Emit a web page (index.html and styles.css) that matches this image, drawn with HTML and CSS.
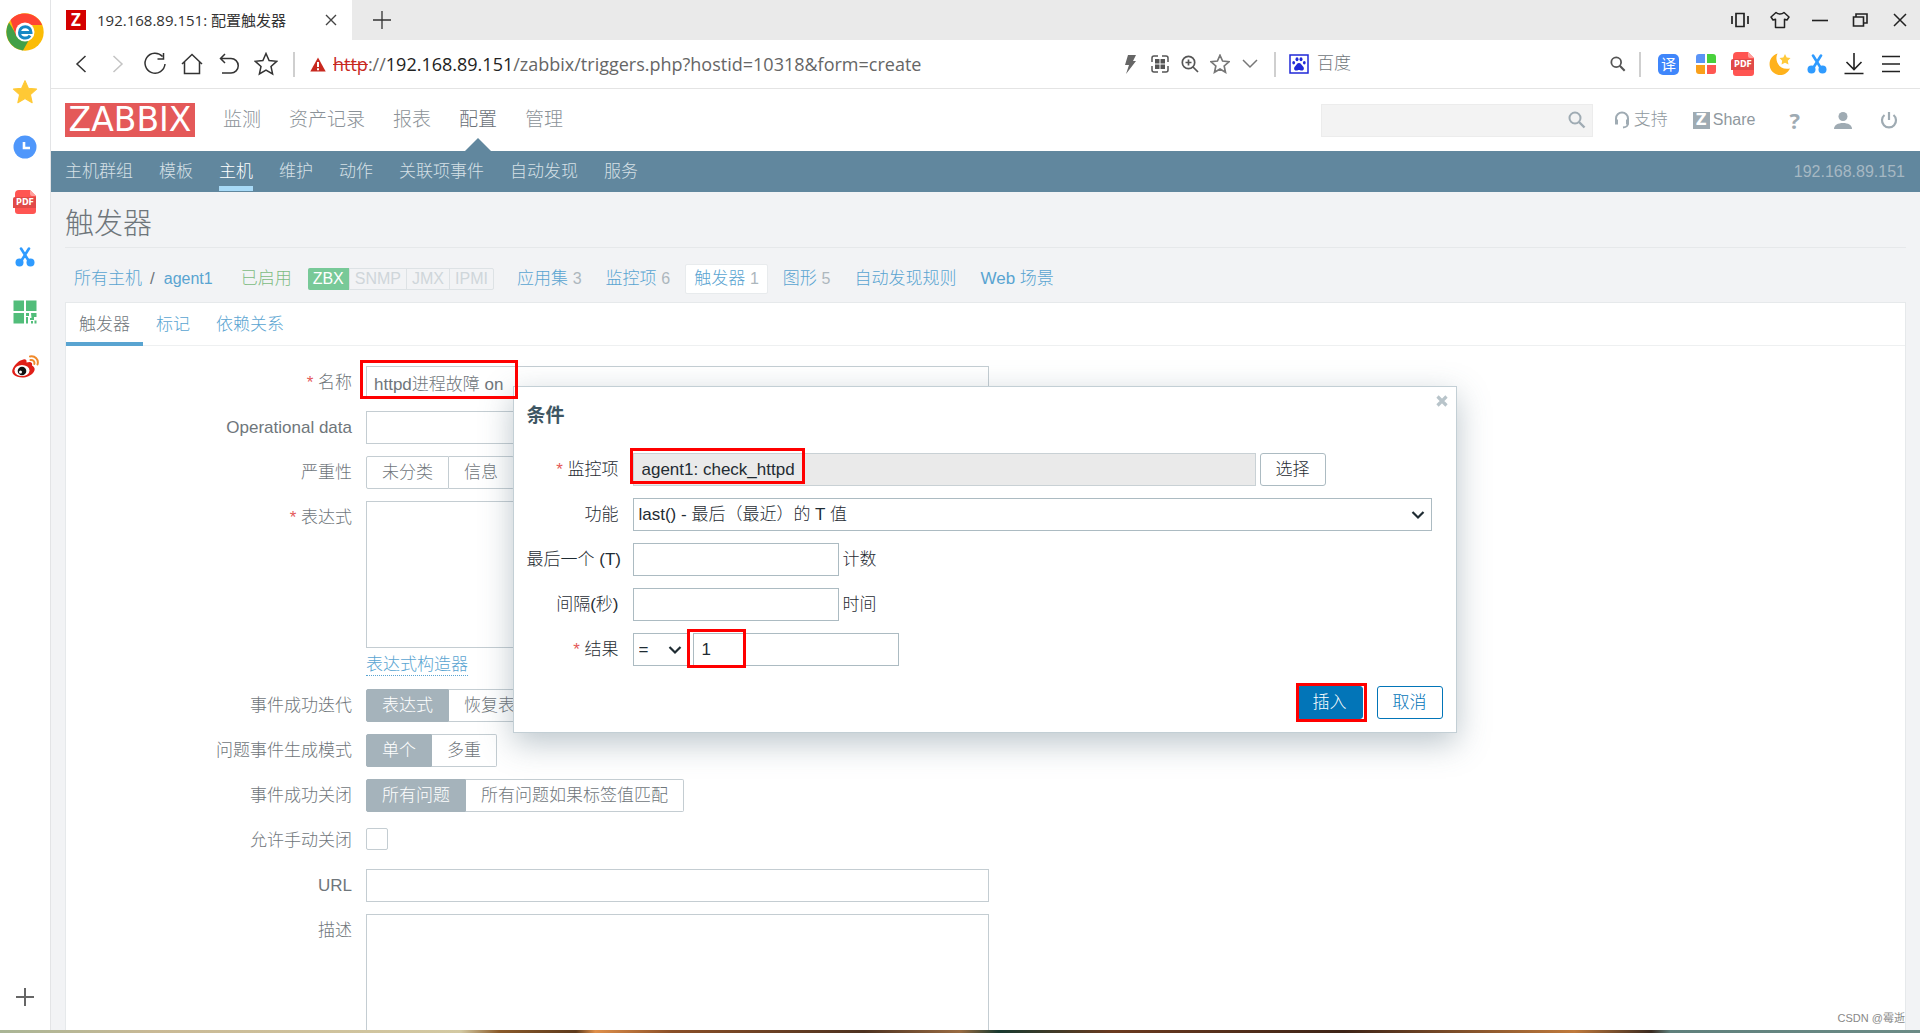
FILE: index.html
```html
<!DOCTYPE html>
<html lang="zh-CN">
<head>
<meta charset="utf-8">
<title>192.168.89.151: 配置触发器</title>
<link rel="stylesheet" href="styles.css">
</head>
<body>
<svg class="sprite" aria-hidden="true">
  <symbol id="i-pdf" viewBox="0 0 24 24"><path fill="#ff5552" d="M6 0h11l6 6v15a3 3 0 0 1-3 3H5a3 3 0 0 1-3-3V4a4 4 0 0 1 4-4z"/><path fill="#ffa09c" d="M17 0l6 6h-4a2 2 0 0 1-2-2z"/><path fill="#e14a48" d="M2 7h21v11H0V9a2 2 0 0 1 2-2z"/><text x="12" y="15" text-anchor="middle" font-family="DejaVu Sans, sans-serif" font-weight="bold" font-size="8" fill="#fff">PDF</text></symbol>
  <symbol id="i-cut" viewBox="0 0 20 20"><g stroke="#2f9bff" stroke-width="2.6" stroke-linecap="round" fill="none"><path d="M6 1.500l7.500 12M14 1.500L6.500 13.500"/></g><circle cx="4.500" cy="15.500" r="4" fill="#2f9bff"/><circle cx="15.500" cy="15.500" r="4" fill="#2f9bff"/></symbol>
  <symbol id="i-star" viewBox="0 0 24 24"><path d="M12 1.500l3.100 7 7.600.8-5.700 5.100 1.600 7.500L12 18l-6.600 3.900L7 14.400 1.300 9.300l7.600-.8z"/></symbol>
  <symbol id="i-search" viewBox="0 0 18 18"><circle cx="7" cy="7" r="5.500" fill="none" stroke="currentColor" stroke-width="2"/><path d="M11 11l5.500 5.500" stroke="currentColor" stroke-width="2.400"/></symbol>
</svg>
<div class="window">
  <aside class="rail">
    <button class="rail-logo" aria-label="浏览器">
      <svg width="38" height="38" viewBox="0 0 38 38"><circle cx="19" cy="19" r="18.700" fill="#fbbc05"/><path fill="#43a047" d="M3 9.500A18.700 18.700 0 0 0 17 37.600L24 25 11 23z"/><path fill="#ff4433" d="M4.500 7A18.700 18.700 0 0 1 36 12H19l-9 11z"/><circle cx="19" cy="19" r="9.500" fill="#fff"/><path d="M13 19.500h12c0-8-11.500-7.500-11.500 0 0 6.500 8 7 10.500 3" fill="none" stroke="#1687c4" stroke-width="3"/></svg>
    </button>
    <button aria-label="收藏"><svg width="26" height="26" fill="#ffc935" stroke="#ffc935" stroke-linejoin="round"><use href="#i-star"/></svg></button>
    <button aria-label="历史"><svg width="24" height="24" viewBox="0 0 24 24"><circle cx="12" cy="12" r="11.500" fill="#4f97fb"/><path d="M11 7v6h6" fill="none" stroke="#fff" stroke-width="2.600"/></svg></button>
    <button aria-label="PDF"><svg width="24" height="24"><use href="#i-pdf"/></svg></button>
    <button aria-label="截图"><svg width="20" height="20"><use href="#i-cut"/></svg></button>
    <button aria-label="二维码"><svg width="24" height="24" viewBox="0 0 24 24" fill="#52bd7a"><path d="M.5.500h10.500v10.500H.5zM13 .500h10.500v10.500H13zM.5 13h10.500v10.500H.5zM13 13h3v3h-3zM13 17h2v6.500h-2zM18 13h5.500v4H21v3h-4v-2h1.500zM18 21h2v2.500h-2zM21.500 20.500h2v3h-2z"/></svg></button>
    <button aria-label="微博"><svg width="28" height="24" viewBox="0 0 28 24"><path fill="#e01f18" d="M11 5c3-1.500 5-.5 4.500 2.500 4-1.500 6.500 0 5.500 3 7 4-1 12-9.500 12C4 22.500 0 18.500 1.500 14.500 3 10.500 7 6 11 5z"/><ellipse cx="11" cy="15.500" rx="7.500" ry="5.500" fill="#fff"/><circle cx="11" cy="16" r="4.300" fill="#111"/><circle cx="9.500" cy="17" r="1.500" fill="#fff"/><path d="M19 1.500c5-1 9 3 7.500 8M19.500 5c2.500-.5 4.500 1.500 3.800 4" fill="none" stroke="#f08a2c" stroke-width="2" stroke-linecap="round"/></svg></button>
    <button class="rail-add" aria-label="添加"><svg width="20" height="20" viewBox="0 0 20 20"><path d="M10 1v18M1 10h18" stroke="#666" stroke-width="2"/></svg></button>
  </aside>
  <div class="main">
    <div class="tabstrip">
      <div class="page-tab"><span class="fav">Z</span><span class="page-tab-title">192.168.89.151: 配置触发器</span>
        <button aria-label="关闭标签"><svg width="12" height="12" viewBox="0 0 12 12"><path d="M1 1l10 10M11 1L1 11" stroke="#444" stroke-width="1.400"/></svg></button></div>
      <button class="new-tab" aria-label="新标签"><svg width="18" height="18" viewBox="0 0 18 18"><path d="M9 0v18M0 9h18" stroke="#333" stroke-width="1.300"/></svg></button>
      <div class="window-buttons">
        <button aria-label="侧栏"><svg width="18" height="16" viewBox="0 0 18 16" fill="none" stroke="#222" stroke-width="1.700"><path d="M5 1.500h8v13H5zM1 4v8M17 4v8"/></svg></button>
        <button aria-label="皮肤"><svg width="20" height="18" viewBox="0 0 20 18" fill="none" stroke="#222" stroke-width="1.500" stroke-linejoin="round"><path d="M6 1.500c2 2 6 2 8 0l5 4.500-2 3-2.500-.7V16.500h-9V8.300L3 9 1 6z"/></svg></button>
        <button aria-label="最小化"><svg width="16" height="16" viewBox="0 0 16 16"><path d="M0 8.500h16" stroke="#222" stroke-width="1.600"/></svg></button>
        <button aria-label="还原"><svg width="16" height="16" viewBox="0 0 16 16" fill="none" stroke="#222" stroke-width="1.600"><path d="M1.500 5h10v9h-10zM4 5V2h11v9h-3"/></svg></button>
        <button aria-label="关闭"><svg width="14" height="14" viewBox="0 0 14 14"><path d="M1 1l12 12M13 1L1 13" stroke="#222" stroke-width="1.500"/></svg></button>
      </div>
    </div>
    <div class="toolbar">
      <div class="tools">
        <button aria-label="后退"><svg width="12" height="18" viewBox="0 0 12 18" fill="none" stroke="#333" stroke-width="1.500"><path d="M10.500 1L2 9l8.500 8"/></svg></button>
        <button aria-label="前进"><svg width="12" height="18" viewBox="0 0 12 18" fill="none" stroke="#c4c4c4" stroke-width="1.500"><path d="M1.500 1L10 9l-8.500 8"/></svg></button>
        <button aria-label="刷新"><svg width="24" height="24" viewBox="0 0 24 24" fill="none" stroke="#333" stroke-width="1.500"><path d="M19.500 4.500A10 10 0 1 0 22 12M20.500 1v6h-6"/></svg></button>
        <button aria-label="主页"><svg width="22" height="22" viewBox="0 0 22 22" fill="none" stroke="#333" stroke-width="1.500"><path d="M1 11L11 1.500 21 11M3.500 9v11.500h15V9"/></svg></button>
        <button aria-label="恢复"><svg width="20" height="22" viewBox="0 0 20 22" fill="none" stroke="#333" stroke-width="1.500"><path d="M6 1L1.500 5.500 6 10M1.500 5.500H12a7 7 0 0 1 0 14.500H3"/></svg></button>
        <button aria-label="收藏"><svg width="24" height="24" fill="none" stroke="#333" stroke-width="1.500"><use href="#i-star"/></svg></button>
      </div>
      <i class="divider"></i>
      <svg class="warn" width="16" height="15" viewBox="0 0 16 15"><path fill="#c8281e" d="M8 .500L15.700 14.500H.3z"/><path d="M8 5v5M8 11.300v2" stroke="#fff" stroke-width="2"/></svg>
      <div class="url"><s>http</s>://<b>192.168.89.151</b>/zabbix/triggers.php?hostid=10318&amp;form=create</div>
      <div class="tools tools-small">
        <button aria-label="极速"><svg width="12" height="19" viewBox="0 0 12 19"><path fill="#666" d="M4 0h8L9 6h3L2 19l3-9H1z"/></svg></button>
        <button aria-label="小程序"><svg width="18" height="18" viewBox="0 0 18 18"><path fill="#555" d="M4 4h4.500v4.500H4zM9.500 4H14v4.500H9.500zM4 9.500h4.500V14H4zM9.500 9.500H14V14H9.500z"/><path d="M1 7V3a2 2 0 0 1 2-2h4M11 1h4a2 2 0 0 1 2 2v4M17 11v4a2 2 0 0 1-2 2h-4M7 17H3a2 2 0 0 1-2-2v-4" fill="none" stroke="#555" stroke-width="1.500"/></svg></button>
        <button aria-label="缩放"><svg width="18" height="18" viewBox="0 0 18 18" fill="none" stroke="#555" stroke-width="1.700"><circle cx="7.500" cy="7.500" r="6.200"/><path d="M12 12l5 5M4.500 7.500h6M7.500 4.500v6"/></svg></button>
        <button aria-label="收藏网页"><svg width="20" height="20" viewBox="0 0 24 24" fill="none" stroke="#777" stroke-width="2"><use href="#i-star" width="24" height="24"/></svg></button>
        <button aria-label="展开"><svg width="16" height="10" viewBox="0 0 16 10" fill="none" stroke="#777" stroke-width="1.500"><path d="M1 1l7 7 7-7"/></svg></button>
      </div>
      <i class="divider"></i>
      <div class="engine">
        <svg width="20" height="20" viewBox="0 0 20 20"><path d="M1 1h18v18H1z" fill="#fff" stroke="#2029d8" stroke-width="1.500"/><g fill="#2029d8"><ellipse cx="4.700" cy="8.800" rx="1.400" ry="1.800"/><ellipse cx="8" cy="5.300" rx="1.500" ry="2"/><ellipse cx="12" cy="5.300" rx="1.500" ry="2"/><ellipse cx="15.300" cy="8.800" rx="1.400" ry="1.800"/><path d="M10 9c2 0 2.500 2 4 3.500s1 4-1 4-2-.5-3-.5-1 .5-3 .5-2.500-2.500-1-4S8 9 10 9z"/></g></svg>
        <span>百度</span>
        <button aria-label="搜索"><svg width="16" height="16"><use href="#i-search"/></svg></button>
      </div>
      <i class="divider"></i>
      <div class="tools">
        <button aria-label="翻译"><span class="translate">译</span></button>
        <button aria-label="应用"><svg width="20" height="20" viewBox="0 0 20 20"><path fill="#5b94f7" d="M3 0h6v9H0V3a3 3 0 0 1 3-3z"/><path fill="#48d13c" d="M11 0h6a3 3 0 0 1 3 3v6h-9z"/><path fill="#f9a01b" d="M0 11h9v9H3a3 3 0 0 1-3-3z"/><path fill="#ff5752" d="M11 11h9v6a3 3 0 0 1-3 3h-6z"/></svg></button>
        <button aria-label="PDF 工具"><svg width="24" height="24"><use href="#i-pdf"/></svg></button>
        <button aria-label="夜间模式"><svg width="24" height="24" viewBox="0 0 24 24"><path fill="#ffb21c" d="M9.500 1.500C6 8 11 19 22 16.500 19 22.500 13.500 24 9 22.500-1 19-1 5 9.500 1.500z"/><path fill="#ffc93a" d="M17 2l1.700 3.500 3.800.5-2.700 2.700.7 3.800-3.500-1.800-3.500 1.800.7-3.800L11.500 6l3.800-.5z"/></svg></button>
        <button aria-label="剪切"><svg width="20" height="20"><use href="#i-cut"/></svg></button>
        <button aria-label="下载"><svg width="20" height="22" viewBox="0 0 20 22" fill="none" stroke="#222" stroke-width="1.600"><path d="M10 0v16M2.500 9L10 16.500 17.500 9M.5 20.500h19"/></svg></button>
        <button aria-label="菜单"><svg width="18" height="20" viewBox="0 0 18 20"><path d="M0 2.500h18M0 10h18M0 17.500h18" stroke="#222" stroke-width="1.600"/></svg></button>
      </div>
    </div>

    <header class="top">
      <a class="logo" href="#">ZABBIX</a>
      <nav class="menu"><a href="#">监测</a><a href="#">资产记录</a><a href="#">报表</a><a href="#" class="on">配置</a><a href="#">管理</a></nav>
      <div class="user">
        <form class="find"><input type="text" aria-label="搜索"><button type="button" aria-label="搜索"><svg width="18" height="18"><use href="#i-search"/></svg></button></form>
        <a class="support" href="#"><svg width="16" height="18" viewBox="0 0 16 18" fill="none" stroke="#9fabb3" stroke-width="2"><path d="M2 12V7.500a6 6 0 0 1 12 0V12M14 12c0 3-1 4-5 4.500"/><path d="M2.500 8.500v5M13.500 8.500v5" stroke-width="3"/></svg>支持</a>
        <a class="share" href="#"><span>Z</span>Share</a>
        <a class="help" href="#">?</a>
        <a class="icon" href="#" aria-label="用户"><svg width="18" height="17" viewBox="0 0 18 17" fill="#9fabb3"><circle cx="9" cy="4.500" r="4.500"/><path d="M0 17c0-4 4-6 9-6s9 2 9 6z"/></svg></a>
        <a class="icon" href="#" aria-label="退出"><svg width="18" height="17" viewBox="0 0 18 17" fill="none" stroke="#9fabb3" stroke-width="2.200"><path d="M4.500 3a7 7 0 1 0 9 0M9 0v8"/></svg></a>
      </div>
    </header>
    <nav class="submenu"><a href="#">主机群组</a><a href="#">模板</a><a href="#" class="on">主机</a><a href="#">维护</a><a href="#">动作</a><a href="#">关联项事件</a><a href="#">自动发现</a><a href="#">服务</a><span>192.168.89.151</span></nav>

    <div class="content">
      <h1>触发器</h1>
      <nav class="crumbs">
        <a href="#">所有主机</a><span class="slash">/</span><a class="host" href="#">agent1</a><span class="ok">已启用</span>
        <span class="avail"><span class="up">ZBX</span><span>SNMP</span><span>JMX</span><span>IPMI</span></span>
        <span class="links"><a href="#">应用集 <sup>3</sup></a><a href="#">监控项 <sup>6</sup></a><a href="#" class="on">触发器 <sup>1</sup></a><a href="#">图形 <sup>5</sup></a><a href="#">自动发现规则</a><a href="#">Web 场景</a></span>
      </nav>
      <section class="card">
        <nav class="tabs"><a href="#" class="on">触发器</a><a href="#">标记</a><a href="#">依赖关系</a></nav>
        <form class="form">
          <label for="name"><em>*</em> 名称</label>
          <div class="marked"><input id="name" type="text" value="httpd进程故障 on"><i class="mark mark-name"></i></div>
          <label for="opdata">Operational data</label>
          <div><input id="opdata" type="text"></div>
          <span class="label">严重性</span>
          <div class="seg"><button type="button">未分类</button><button type="button">信息</button></div>
          <label for="expr"><em>*</em> 表达式</label>
          <div class="expr"><textarea id="expr"></textarea><a href="#">表达式构造器</a></div>
          <span class="label">事件成功迭代</span>
          <div class="seg"><button type="button" class="on">表达式</button><button type="button">恢复表达式</button></div>
          <span class="label">问题事件生成模式</span>
          <div class="seg"><button type="button" class="on">单个</button><button type="button">多重</button></div>
          <span class="label">事件成功关闭</span>
          <div class="seg"><button type="button" class="on">所有问题</button><button type="button">所有问题如果标签值匹配</button></div>
          <label for="manual">允许手动关闭</label>
          <div class="check"><input id="manual" type="checkbox"></div>
          <label for="url">URL</label>
          <div><input id="url" type="text"></div>
          <label for="desc">描述</label>
          <div><textarea id="desc"></textarea></div>
        </form>
      </section>
    </div>

    <div class="dialog" role="dialog" aria-labelledby="dlg-title">
      <button class="close" aria-label="关闭"><svg width="12" height="12" viewBox="0 0 12 12"><path d="M1.500 1.500l9 9M10.500 1.500l-9 9" stroke="#b8c4ca" stroke-width="3.200"/></svg></button>
      <h2 id="dlg-title">条件</h2>
      <form>
        <div class="fields">
          <label for="item"><em>*</em> 监控项</label>
          <div class="marked"><input id="item" class="wide" type="text" readonly value="agent1: check_httpd"><button type="button">选择</button><i class="mark mark-item"></i></div>
          <label for="func">功能</label>
          <div><select id="func"><option>last() - 最后（最近）的 T 值</option></select></div>
          <label for="last">最后一个 (T)</label>
          <div><input id="last" type="text"><span>计数</span></div>
          <label for="shift">间隔(秒)</label>
          <div><input id="shift" type="text"><span>时间</span></div>
          <label for="value"><em>*</em> 结果</label>
          <div class="marked"><select class="op" aria-label="运算符"><option>=</option></select><input id="value" type="text" value="1"><i class="mark mark-value"></i></div>
        </div>
        <div class="actions"><span class="marked"><button type="button" class="primary">插入</button><i class="mark mark-insert"></i></span><button type="button" class="plain">取消</button></div>
      </form>
    </div>
    <span class="credit">CSDN @霉逝</span>
  </div>
</div>
<div class="desktop"></div>
</body>
</html>
```
FILE: styles.css
```css
* { box-sizing: border-box; }
body {
  margin: 0;
  height: 100vh;
  display: flex;
  flex-direction: column;
  overflow: hidden;
  background: #fff;
  color: #6f767b;
  font: 300 17px/20px "Liberation Sans", "Noto Sans CJK SC", sans-serif;
}
.sprite { display: none; }
a { color: #59a4d1; text-decoration: none; }
button { font: inherit; color: inherit; padding: 0; border: 0; background: none; }
input, select, textarea { font: inherit; color: inherit; margin: 0; }
svg { display: block; flex: none; }
em { color: #e45959; font-style: normal; }

.window { flex: 1; min-height: 0; display: flex; }
.desktop {
  flex: none;
  height: 3px;
  background: linear-gradient(90deg, #a9b595 0, #c9b995 8%, #d3c9a2 24%, #8a5a2a 26%, #5d3a1c 30%, #e0904a 31%, #8a4f27 35%, #4d3220 45%, #9a6c42 50%, #17392f 52%, #6b3a1f 58%, #3d2417 70%, #c07a3c 82%, #3a2a20 86%, #5f807c 87%, #6b8b86 100%);
}

/* browser rail */
.rail { flex: none; width: 51px; border-right: 1px solid #e3e4e6; display: flex; flex-direction: column; }
.rail button { height: 55px; display: flex; align-items: center; justify-content: center; }
.rail .rail-logo { height: 64px; }
.rail .rail-add { margin-top: auto; margin-bottom: 6px; }
.main { flex: 1; min-width: 0; display: flex; flex-direction: column; position: relative; }

/* browser tabs */
.tabstrip { flex: none; height: 40px; display: flex; background: #eaeaea; color: #333; font: 15px/20px "Open Sans", "Noto Sans CJK SC", sans-serif; }
.page-tab { width: 301px; padding: 0 15px; background: #fff; display: flex; align-items: center; }
.fav { width: 20px; height: 20px; margin-right: 11px; background: #d40000; color: #fff; text-align: center; font-weight: bold; font-size: 17px; }
.page-tab-title { flex: 1; white-space: nowrap; }
.new-tab { width: 60px; display: flex; align-items: center; justify-content: center; }
.window-buttons { margin-left: auto; display: flex; }
.window-buttons button { width: 40px; display: flex; align-items: center; justify-content: center; }

/* browser toolbar */
.toolbar { flex: none; height: 49px; padding: 0 11px 0 11px; border-bottom: 1px solid #e4e4e4; display: flex; align-items: center; }
.tools { display: flex; }
.tools button { width: 37px; height: 40px; display: flex; align-items: center; justify-content: center; }
.tools-small button { width: 30px; }
.divider { width: 2px; height: 25px; margin: 0 9px; background: #cfcfcf; }
.warn { margin: 0 7px 0 6px; }
.url { flex: 1; white-space: nowrap; overflow: hidden; color: #666; font: 18px/24px "Open Sans", sans-serif; }
.url s { color: #c8281e; }
.url b { color: #222; font-weight: normal; }
.engine { width: 345px; padding-left: 4px; display: flex; align-items: center; gap: 8px; }
.engine button { margin-left: auto; margin-right: 4px; color: #555; }
.translate { width: 21px; height: 21px; border-radius: 5px; background: #3f86fb; color: #fff; font: 15px/20px "Noto Sans CJK SC", sans-serif; }

/* application header */
.top { flex: none; height: 62px; padding: 0 15px 0 14px; display: flex; align-items: center; }
.logo { width: 130px; height: 34px; background: #e45959; color: #fff; font: 33px/34px "DejaVu Sans", sans-serif; text-align: center; }
.menu { align-self: stretch; display: flex; gap: 28px; margin-left: 28px; font-size: 19px; line-height: 62px; }
.menu a { color: #8b9298; position: relative; }
.menu .on { color: #6a7178; }
.menu .on::after { content: ""; position: absolute; left: 50%; bottom: 0; margin-left: -13px; border: 13px solid transparent; border-top: 0; border-bottom-color: #61879e; }
.user { margin-left: auto; display: flex; align-items: center; font-size: 16px; }
.user a { color: #8f989e; display: flex; align-items: center; }
.find { width: 272px; height: 33px; position: relative; }
.find input { width: 100%; height: 100%; border: 1px solid #ececec; background: #f3f3f3; }
.find button { position: absolute; right: 7px; top: 7px; color: #9fabb3; }
.support { margin-left: 21px; gap: 4px; font-size: 17px; }
.share { margin-left: 25px; gap: 3px; }
.share span { width: 17px; height: 17px; background: #9fabb3; color: #fff; font: bold 15px/17px "DejaVu Sans", sans-serif; text-align: center; }
.user .help { margin-left: 34px; color: #9fabb3; font: bold 22px/24px "Open Sans", sans-serif; }
.help + .icon { margin-left: 34px; }
.icon + .icon { margin-left: 28px; margin-right: 7px; }

.submenu { flex: none; height: 41px; padding: 0 15px 0 14px; background: #61879e; display: flex; gap: 26px; line-height: 41px; }
.submenu a { color: #d6e0e6; height: 40px; }
.submenu .on { color: #fff; border-bottom: 5px solid #a8daf7; }
.submenu span { margin-left: auto; color: #a6b8c3; font-size: 16px; line-height: 41px; }

/* page */
.content { flex: 1; min-height: 0; padding: 0 14px; background: #f2f3f5; display: flex; flex-direction: column; overflow: hidden; }
h1 { flex: none; height: 56px; margin: 0; border-bottom: 1px solid #e6e8ea; font-weight: 300; font-size: 29px; line-height: 64px; }
.crumbs { flex: none; padding: 16px 0 8px 9px; display: flex; align-items: center; line-height: 30px; white-space: nowrap; }
.slash { margin: 0 9px 0 8px; }
.host { font-size: 16px; }
.ok { margin-left: 28px; color: #7dbb7f; }
.avail { margin-left: 16px; display: flex; font-size: 16px; line-height: 20px; border: 1px solid #dde2e5; border-radius: 2px; color: #cfd6da; }
.avail span { padding: 0 5px; border-left: 1px solid #dde2e5; }
.avail .up { margin: -1px 0 -1px -1px; padding: 1px 5px; border: 0; border-radius: 2px 0 0 2px; background: #78c998; color: #fff; }
.links { display: flex; margin-left: 14px; gap: 6px; }
.links a { height: 30px; padding: 0 8px; border: 1px solid transparent; border-radius: 2px; line-height: 28px; }
.links .on { background: #fff; border-color: #e8ebed; }
sup { font-size: 16px; vertical-align: baseline; line-height: 1; color: #adb7bd; }
.card { flex: 1; min-height: 0; background: #fff; border: 1px solid #e6e9eb; border-bottom: 0; }
.tabs { height: 43px; display: flex; border-bottom: 1px solid #eef0f1; line-height: 44px; }
.tabs a { padding: 0 13px; height: 43px; }
.tabs .on { color: #6f767b; border-bottom: 4px solid #59a4d1; }
.form { padding-top: 20px; display: grid; grid-template-columns: 286px minmax(0, 623px); gap: 12px 14px; }
.form label, .form .label, .fields label { text-align: right; line-height: 33px; white-space: nowrap; }
.form input[type="text"] { display: block; width: 100%; height: 33px; padding: 0 7px; border: 1px solid #c4cdd2; background: #fff; }
textarea { display: block; width: 100%; height: 147px; border: 1px solid #c4cdd2; background: #fff; resize: none; }
.expr { height: 176px; }
.expr a { display: inline-block; margin-top: 7px; border-bottom: 1px dotted #59a4d1; }
.seg { display: flex; white-space: nowrap; }
.seg button { height: 33px; padding: 0 15px; border: 1px solid #c4cdd2; border-left-width: 0; }
.seg button:first-child { border-left-width: 1px; border-radius: 2px 0 0 2px; }
.seg button:last-child { border-radius: 0 2px 2px 0; }
.seg .on { background: #a5b3bb; border-color: #a5b3bb; color: #fff; }
.check { height: 33px; padding-top: 4px; }
.check input { display: block; appearance: none; width: 22px; height: 22px; border: 1px solid #c4cdd2; border-radius: 2px; }

/* condition dialog */
.dialog { position: absolute; top: 386px; left: 0; right: 2px; margin: 0 auto; width: 944px; padding: 10px 13px 13px; background: #fff; border: 1px solid #c3cfd5; box-shadow: 0 10px 30px rgba(80, 105, 120, .38); color: #1f2c33; }
.dialog h2 { margin: 0 0 18px; font-size: 19px; line-height: 38px; color: #3e5663; }
.close { position: absolute; top: 8px; right: 8px; }
.fields { display: grid; grid-template-columns: 92px 1fr; gap: 12px 14px; }
.fields div { display: flex; align-items: center; gap: 4px; }
.fields input { width: 206px; height: 33px; padding: 0 8px; border: 1px solid #acbbc2; background: #fff; }
.fields .wide { width: 623px; background: #eaeaea; border-color: #c9d1d5; }
.fields select {
  appearance: none;
  width: 799px;
  height: 33px;
  padding: 0 5px;
  border: 1px solid #acbbc2;
  border-radius: 0;
  background: #fff url("data:image/svg+xml,%3Csvg xmlns='http://www.w3.org/2000/svg' width='14' height='10' viewBox='0 0 14 10'%3E%3Cpath d='M1.500 2l5.500 5.500L12.500 2' fill='none' stroke='%231f2c33' stroke-width='2.200'/%3E%3C/svg%3E") no-repeat right 6px center;
}
.fields .op { width: 56px; }
.dialog div > button, .actions button { width: 66px; height: 33px; border: 1px solid #acbbc2; border-radius: 3px; }
.actions { display: flex; justify-content: flex-end; gap: 14px; margin-top: 20px; }
.actions .primary { background: #0275b8; border-color: #0275b8; color: #fff; }
.actions .plain { border-color: #0275b8; color: #0275b8; }

/* highlight frames drawn over the controls */
.marked { position: relative; }
.mark { position: absolute; z-index: 10; border: 3px solid #f00; pointer-events: none; }
.mark-name { left: -6px; top: -6px; width: 158px; height: 39px; }
.mark-item { left: -3px; top: -5px; width: 175px; height: 36px; }
.mark-value { left: 54px; top: -4px; width: 59px; height: 39px; }
.mark-insert { left: -1px; top: -3px; width: 71px; height: 39px; }
.credit { position: absolute; right: 15px; bottom: 4px; font: 11px/16px "Liberation Sans", "Noto Sans CJK SC", sans-serif; color: #888; }
```
